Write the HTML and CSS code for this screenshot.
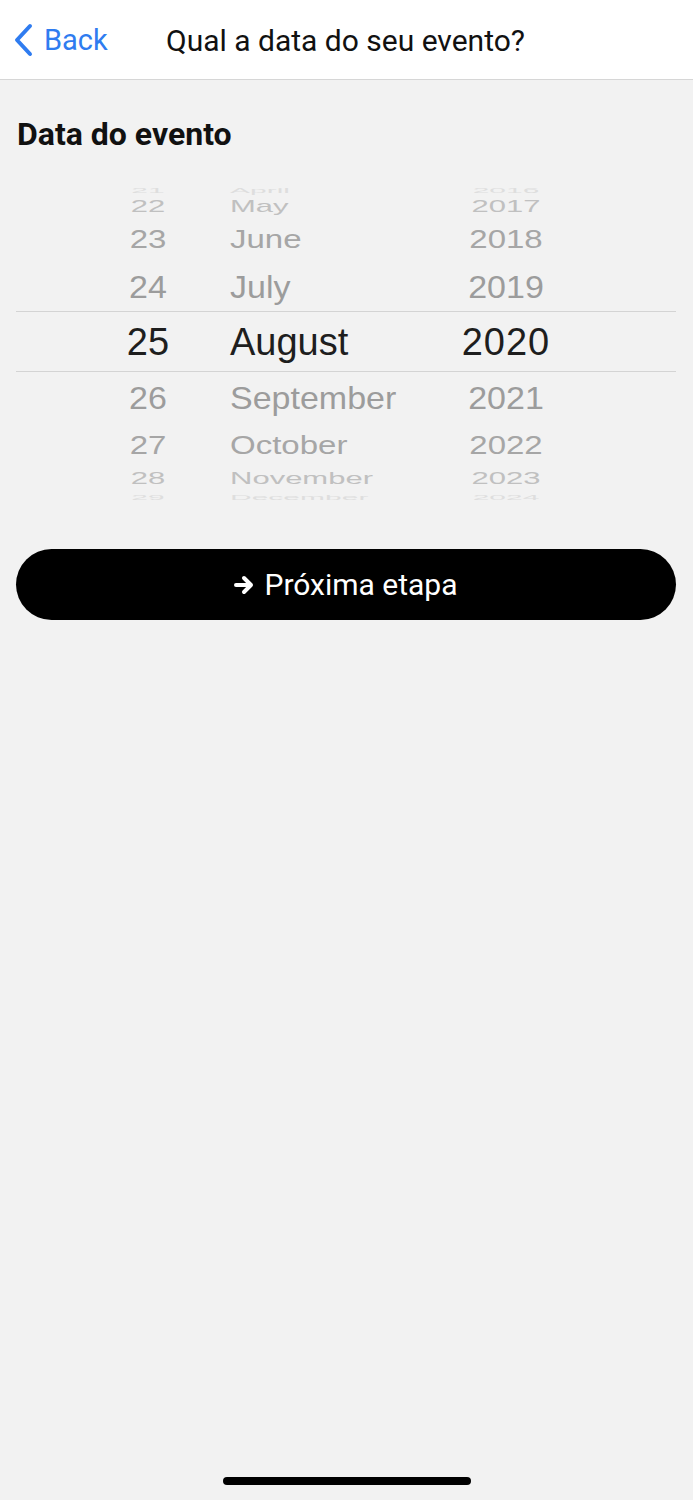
FILE: index.html
```html
<!DOCTYPE html>
<html lang="pt">
<head>
  <meta charset="UTF-8" />
  <meta name="viewport" content="width=device-width, initial-scale=1.0"/>
  <title>Qual a data do seu evento?</title>

  <link rel="stylesheet" href="styles.css">
</head>
<body>

  <div class="navbar">
    <a class="back" href="#">
      <svg class="chevron" width="22" height="34" viewBox="0 0 22 34">
        <path d="M18 3 L5 17 L18 31" fill="none" stroke="#2f7cf0" stroke-width="4" stroke-linecap="round" stroke-linejoin="round"/>
      </svg>
      <span>Back</span>
    </a>
    <div class="title">Qual a data do seu evento?</div>
  </div>

  <div class="content">
    <h2>Data do evento</h2>

    <!-- Date wheel -->
    <div class="picker">
      <div class="row r4 up"><span class="d">21</span><span class="m">April</span><span class="y">2016</span></div>
      <div class="row r3 up"><span class="d">22</span><span class="m">May</span><span class="y">2017</span></div>
      <div class="row r2 up"><span class="d">23</span><span class="m">June</span><span class="y">2018</span></div>
      <div class="row r1 up"><span class="d">24</span><span class="m">July</span><span class="y">2019</span></div>
      <div class="row selected"><span class="d">25</span><span class="m">August</span><span class="y">2020</span></div>
      <div class="row r1 down"><span class="d">26</span><span class="m">September</span><span class="y">2021</span></div>
      <div class="row r2 down"><span class="d">27</span><span class="m">October</span><span class="y">2022</span></div>
      <div class="row r3 down"><span class="d">28</span><span class="m">November</span><span class="y">2023</span></div>
      <div class="row r4 down"><span class="d">29</span><span class="m">December</span><span class="y">2024</span></div>
    </div>

    <button type="button" class="next">
      <svg width="22" height="20" viewBox="0 0 22 20">
        <path d="M2 10 H17 M10 3 L17 10 L10 17" fill="none" stroke="#fff" stroke-width="4" stroke-linecap="round" stroke-linejoin="round"/>
      </svg>
      <span>Próxima etapa</span>
    </button>
  </div>

  <div class="home-bar"></div>

</body>
</html>
```

FILE: styles.css
```css
body {
  margin: 0;
  padding: 0;
  font-family: Roboto, 'Liberation Sans', sans-serif;
  background: #f2f2f2;
  min-height: 1500px;
  display: flex;
  flex-direction: column;
}

.navbar {
  height: 79px;
  background: #ffffff;
  border-bottom: 1px solid #d6d6d6;
  display: flex;
  align-items: center;
  padding-left: 12px;
}

.back {
  display: flex;
  align-items: center;
  gap: 10px;
  color: #2f7cf0;
  text-decoration: none;
  font-size: 29px;
  width: 154px;
}

.chevron {
  margin-top: 1px;
}

.title {
  font-size: 30px;
  color: #111;
  margin-top: 2px;
}

.content {
  flex: 1;
  padding: 0 17px 0 16px;
}

h2 {
  margin: 37px 0 0 1px;
  font-size: 32px;
  font-weight: bold;
  color: #111;
  line-height: 34px;
}

.picker {
  margin-top: 31px;
  font-family: 'Liberation Sans', Arial, sans-serif;
  padding-left: 82px;
}

.row {
  display: grid;
  grid-template-columns: 100px 243px 130px;
  align-items: center;
  white-space: nowrap;
}

.row span {
  display: block;
  line-height: 1;
}

.d {
  text-align: center;
}

.m {
  padding-left: 32px;
}

.y {
  text-align: center;
}

.selected {
  height: 61px;
  box-sizing: border-box;
  border-top: 1px solid #d4d4d4;
  border-bottom: 1px solid #d4d4d4;
  margin-left: -82px;
  padding-left: 82px;
  font-size: 38px;
  color: #1e1e1e;
}

.selected .y {
  letter-spacing: 1px;
}

.r1 {
  font-size: 34px;
  color: #9c9c9c;
}

.r1 span {
  transform: scaleY(0.9);
}

.r1.up {
  height: 49px;
}

.r1.down {
  height: 52px;
}

.r2 {
  font-size: 33px;
  color: #a6a6a6;
}

.r2 span {
  transform: scaleY(0.76);
}

.r2.up {
  height: 46px;
}

.r2.down {
  height: 42px;
}

.r3 {
  font-size: 31px;
  color: #c0c0c0;
  height: 20px;
}

.r3.up span {
  transform: translateY(-5px) scaleY(0.52);
}

.r3.down span {
  transform: translateY(-3px) scaleY(0.52);
}

.r4 {
  font-size: 30px;
  color: #dedede;
  height: 14px;
}

.r4.up span {
  transform: translateY(-6px) scaleY(0.22);
}

.r4.down span {
  transform: translateY(-3px) scaleY(0.22);
}

.next {
  margin-top: 49px;
  width: 100%;
  height: 71px;
  border: none;
  border-radius: 36px;
  background: #000;
  color: #fff;
  font-family: Roboto, 'Liberation Sans', sans-serif;
  font-size: 30px;
  display: flex;
  align-items: center;
  justify-content: center;
  gap: 8px;
  cursor: pointer;
}

.home-bar {
  align-self: center;
  width: 248px;
  height: 8px;
  border-radius: 4px;
  background: #000;
  margin-bottom: 15px;
}
```
